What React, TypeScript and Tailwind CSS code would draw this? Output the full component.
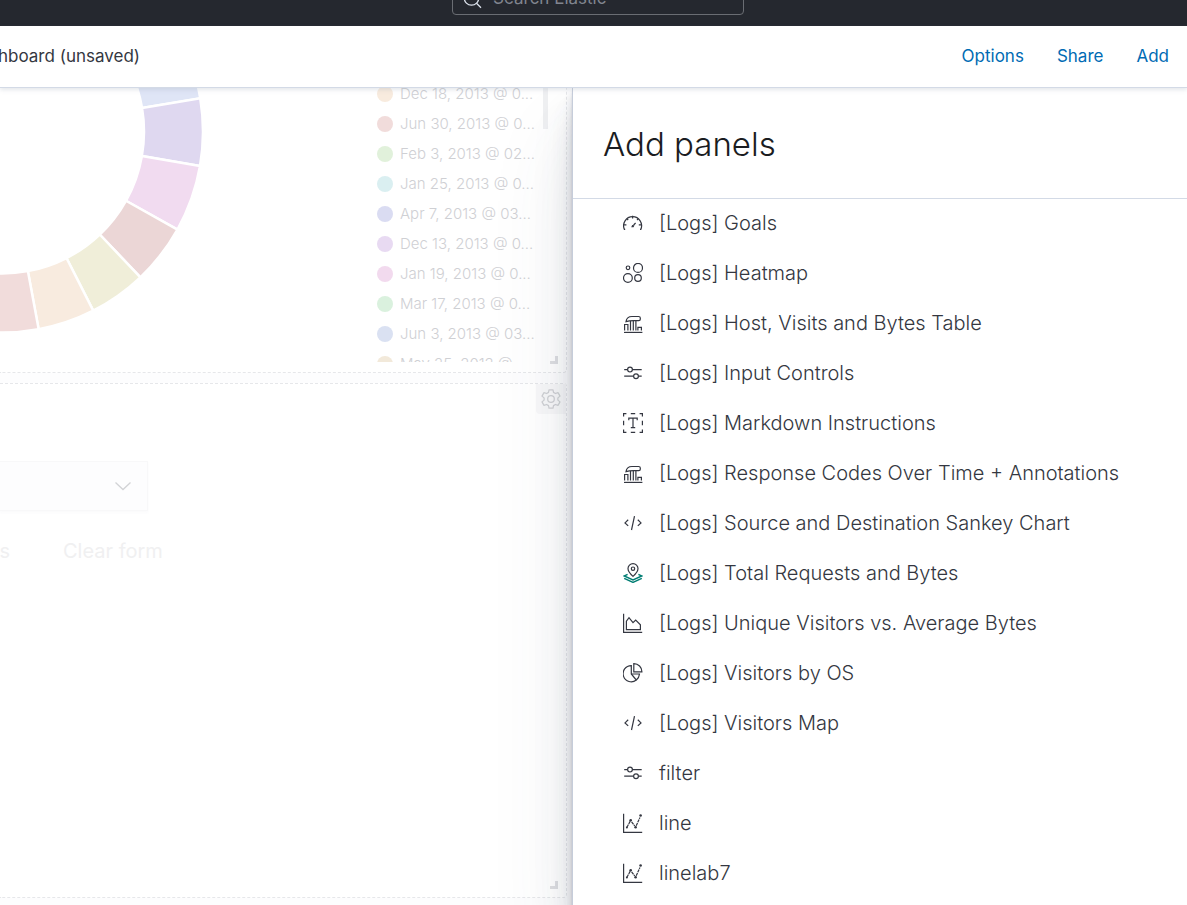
import { useId } from "react";
import type { ReactNode } from "react";

type IconName = "gauge" | "heatmap" | "builder" | "controls" | "text" | "code" | "map" | "area" | "pie" | "line";

const icons: Record<IconName, ReactNode> = {
  gauge: (
    <>
      <path d="M2.2 16.4H1.4A9 9 0 1 1 17.8 16.4H17" />
      <path d="M9.6 2.8v2.6M.8 11.8h2.6M15.8 11.8h2.6M4 5.8l1.2 1.2M15.2 5.8L14 7M12.6 10l-2 2" />
      <path d="M8.2 14.2l1-2.2 2.2.2-.8 2z" fill="currentColor" stroke="none" />
    </>
  ),
  heatmap: (
    <>
      <circle cx="5" cy="4.8" r="1.8" />
      <circle cx="15" cy="4.9" r="4.5" />
      <circle cx="4.9" cy="15" r="4.4" />
      <circle cx="15" cy="15" r="3.3" />
    </>
  ),
  builder: (
    <>
      <path d="M1 19.4h18.4" />
      <path d="M3 8.6C3.4 5.4 5.6 3.5 9 3.5h6.6c1.100 0 1.700.6 1.700 1.500v1.200c0 .900-.6 1.400-1.500 1.400h-5c-3 0-5.200.1-7.800 1z" />
      <path d="M7.500 8v9.400M10.300 8v9.400M12.900 8v9.400M1.600 17.400v-5.900h3.300v5.900M14.900 17.400v-3.100h3.500v3.100" />
    </>
  ),
  controls: (
    <>
      <path d="M1.200 6.600h3.300M9.500 6.600h9.200M1.200 13.200h9.300M15.500 13.200h3.200" />
      <circle cx="7" cy="6.600" r="2.400" />
      <circle cx="13" cy="13.200" r="2.400" />
    </>
  ),
  text: (
    <>
      <path d="M.6 3.400V.6h2.800M7.800.6h4.400M16.600.6h2.800v2.800M19.400 7.800v4.400M19.400 16.600v2.800h-2.800M12.200 19.400H7.800M3.400 19.400H.6v-2.800M.6 12.200V7.800" />
      <path d="M5.800 7.200v-2h8.400v2M10 5.200v9.400M7.800 14.600h4.400" />
    </>
  ),
  code: <path d="M5.200 6.800L2 9.900l3.200 3M11.500 3.200L8.500 17M14.800 6.800L18 9.900l-3.200 3" />,
  map: (
    <>
      <path d="M4.600 11.400L1.200 13l8.800 4 8.800-4-3.400-1.600M1.200 15.400l8.800 4 8.800-4" className="text-[#017d73]" stroke="currentColor" strokeWidth="1.400" />
      <path d="M10 13.400C7 10.800 5 8.400 5 5.600a5 5 0 0 1 10 0c0 2.800-2 5.200-5 7.800z" />
      <circle cx="10" cy="5.700" r="1.700" />
    </>
  ),
  area: (
    <>
      <path d="M.6.8v18.600h18.600" />
      <path d="M3.400 16.700V8.200L6 4.700l4 5 2.700-2.600 4.700 4.600v5z" />
    </>
  ),
  pie: (
    <>
      <path d="M8.300 2.600A8.100 8.100 0 1 0 13.300 17L8.300 11z" />
      <path d="M8.300 11h8.200a8.400 8.400 0 0 1-3.200 6" />
      <path d="M10.800.700a8 8 0 0 1 8.100 8.100h-8.100z" />
    </>
  ),
  line: (
    <>
      <path d="M.6.8v18.600h18.600" />
      <path d="M3.900 14.300l3.400-6.200M8.600 8.800l3.200 4.200M13.200 12.800L17 4.400" strokeDasharray="3.200 0.600" />
      <g fill="currentColor" stroke="none">
        <circle cx="3.900" cy="14.500" r="1" />
        <circle cx="7.700" cy="7.300" r="1.300" />
        <circle cx="12.600" cy="14.200" r="1.300" />
        <circle cx="17.600" cy="2.500" r="1.300" />
      </g>
    </>
  ),
};

function Icon({ name }: { name: IconName }) {
  return (
    <svg viewBox="0 0 20 20" className="size-5 shrink-0" fill="none" stroke="currentColor" strokeWidth="1.200" aria-hidden="true">
      {icons[name]}
    </svg>
  );
}

const panels: { icon: IconName; label: string }[] = [
  { icon: "gauge", label: "[Logs] Goals" },
  { icon: "heatmap", label: "[Logs] Heatmap" },
  { icon: "builder", label: "[Logs] Host, Visits and Bytes Table" },
  { icon: "controls", label: "[Logs] Input Controls" },
  { icon: "text", label: "[Logs] Markdown Instructions" },
  { icon: "builder", label: "[Logs] Response Codes Over Time + Annotations" },
  { icon: "code", label: "[Logs] Source and Destination Sankey Chart" },
  { icon: "map", label: "[Logs] Total Requests and Bytes" },
  { icon: "area", label: "[Logs] Unique Visitors vs. Average Bytes" },
  { icon: "pie", label: "[Logs] Visitors by OS" },
  { icon: "code", label: "[Logs] Visitors Map" },
  { icon: "controls", label: "filter" },
  { icon: "line", label: "line" },
  { icon: "line", label: "linelab7" },
];

const legend = [
  { dot: "bg-[#f8ebde]", label: "Dec 18, 2013 @ 0..." },
  { dot: "bg-[#f1dcdb]", label: "Jun 30, 2013 @ 0..." },
  { dot: "bg-[#e1f1db]", label: "Feb 3, 2013 @ 02..." },
  { dot: "bg-[#daeff1]", label: "Jan 25, 2013 @ 0..." },
  { dot: "bg-[#dadcf2]", label: "Apr 7, 2013 @ 03..." },
  { dot: "bg-[#e8daf2]", label: "Dec 13, 2013 @ 0..." },
  { dot: "bg-[#f2daee]", label: "Jan 19, 2013 @ 0..." },
  { dot: "bg-[#daf1de]", label: "Mar 17, 2013 @ 0..." },
  { dot: "bg-[#dae1f2]", label: "Jun 3, 2013 @ 03..." },
  { dot: "bg-[#f2e9da]", label: "May 25, 2013 @ ..." },
];

const slices = [
  { from: -30, to: -9.500, fill: "#dfe5f6" },
  { from: -9.500, to: 9.900, fill: "#dfd8f0" },
  { from: 9.900, to: 29.200, fill: "#f1dbf0" },
  { from: 29.200, to: 46.500, fill: "#ebd6d6" },
  { from: 46.500, to: 63, fill: "#f0eed9" },
  { from: 63, to: 79.500, fill: "#f8ebdf" },
  { from: 79.500, to: 98, fill: "#f1dcdb" },
];

function slicePath(from: number, to: number) {
  const at = (r: number, deg: number) => {
    const a = (deg * Math.PI) / 180;
    return `${(2 + r * Math.cos(a)).toFixed(2)} ${(43.5 + r * Math.sin(a)).toFixed(2)}`;
  };
  return `M${at(142, from)}L${at(201, from)}A201 201 0 0 1 ${at(201, to)}L${at(142, to)}A142 142 0 0 0 ${at(142, from)}Z`;
}

function ResizeHandle() {
  return <span className="absolute bottom-2 right-2 size-2 border-b-3 border-r-3 border-[#dedfe2]" />;
}

export default function App() {
  const selectId = useId();
  return (
    <div className="flex h-screen flex-col overflow-hidden bg-white font-['Inter',sans-serif] text-[#343741]">
      <div className="flex h-[26px] shrink-0 items-end justify-center overflow-hidden bg-[#25282f] pb-[11px] pl-[9px]">
        <div className="flex h-10 w-[292px] shrink-0 items-center gap-2.5 rounded-sm border border-[#6a6d73] px-2.5 pt-2 text-[#dfe5ef]">
          <svg viewBox="0 0 20 20" className="size-5 shrink-0" fill="none" stroke="currentColor" strokeWidth="1.300" aria-hidden="true">
            <circle cx="8.500" cy="9" r="7.200" />
            <path d="M13.500 14.200l4.500 4.500" />
          </svg>
          <input
            type="search"
            aria-label="Search Elastic"
            placeholder="Search Elastic"
            className="min-w-0 flex-1 bg-transparent text-[17px] outline-none placeholder:text-[#81858f]"
          />
        </div>
      </div>

      <header className="relative z-20 flex h-[62px] shrink-0 items-center justify-between border-b border-[#d3dae6] bg-white pb-0.5 pr-[18px] shadow-[0_2px_4px_rgba(152,162,179,0.25)]">
        <h1 className="flex w-[140px] justify-end overflow-hidden whitespace-nowrap text-[17px] leading-6">Dashboard (unsaved)</h1>
        <nav className="flex gap-[33px] text-[17px] leading-6 text-[#006bb4]">
          <a href="#options">Options</a>
          <a href="#share">Share</a>
          <a href="#add">Add</a>
        </nav>
      </header>

      <div className="flex min-h-0 flex-1">
        <main className="flex min-w-0 flex-1 flex-col gap-2.5 bg-[#fdfdfe] pb-[7px] pr-[5px]">
          <section className="relative flex h-[285px] shrink-0 justify-between overflow-hidden rounded-br border-b border-r border-dashed border-[#e6e7ea] bg-white">
            <svg viewBox="0 0 210 250" className="h-[250px] w-[210px] shrink-0" role="img" aria-label="Donut chart">
              {slices.map((s) => (
                <path key={s.from} d={slicePath(s.from, s.to)} fill={s.fill} stroke="#fff" strokeWidth="2.500" />
              ))}
            </svg>
            <div className="mr-[18px] flex h-[274px] gap-2.5 overflow-hidden">
              <ul className="-mt-[9px] w-[156px] text-[15px] font-light leading-[30px] text-[#cfd0d4]">
                {legend.map((l) => (
                  <li key={l.label} className="flex h-[30px] items-center gap-[7px] whitespace-nowrap">
                    <span className={`size-4 shrink-0 rounded-full ${l.dot}`} />
                    {l.label}
                  </li>
                ))}
              </ul>
              <div className="h-[41px] w-[5px] bg-[#eff0f2]" />
            </div>
            <ResizeHandle />
          </section>

          <section className="relative min-h-0 flex-1 rounded-r border-y border-r border-dashed border-[#e6e7ea] bg-white">
            <div className="flex justify-end">
              <button type="button" aria-label="Panel options" className="grid size-[30px] place-items-center rounded-bl bg-[#f8f8f9] text-[#cfd0d4]">
                <svg viewBox="0 0 20 20" className="size-5" fill="none" stroke="currentColor" strokeWidth="1.250" strokeLinejoin="round" aria-hidden="true">
                  <path d="M8 .8h4l.5 2.600 1.900 1.100 2.600-.9 2 3.500-2.100 1.800v2.200l2.100 1.800-2 3.500-2.600-.9-1.900 1.100-.5 2.600H8l-.5-2.600-1.900-1.100-2.600.9-2-3.500 2.100-1.800V8.900L1 7.100l2-3.500 2.600.9 1.900-1.100z" />
                  <circle cx="10" cy="10" r="3.300" />
                </svg>
              </button>
            </div>
            <div className="mt-[47px] flex w-[148px] items-center border border-l-0 border-[#f8f8f9] bg-[#fdfdfe] pr-3.5 shadow-[0_2px_2px_rgba(152,162,179,0.04)]">
              <label htmlFor={selectId} className="sr-only">Filter value</label>
              <select id={selectId} className="h-12 min-w-0 flex-1 appearance-none bg-transparent text-[18px] outline-none" />
              <svg viewBox="0 0 20 20" className="pointer-events-none size-5" fill="none" stroke="#d2d3d6" strokeWidth="1.300" aria-hidden="true">
                <path d="M2.500 6.500L10 13.500l7.500-7" />
              </svg>
            </div>
            <div className="mt-[25px] flex gap-[53px] text-[20px] leading-[30px] text-[#f0f0f1]">
              <button type="button" className="flex w-2.5 justify-end overflow-hidden whitespace-nowrap">Cancel changes</button>
              <button type="button">Clear form</button>
            </div>
            <ResizeHandle />
          </section>
        </main>

        <aside
          aria-label="Add panels"
          className="relative z-10 flex w-[615px] shrink-0 flex-col border-l border-[#c6cdda] bg-white shadow-[0_50px_80px_rgba(65,78,101,0.1),0_30px_40px_rgba(65,78,101,0.1),0_20px_20px_rgba(65,78,101,0.1),0_10px_10px_rgba(65,78,101,0.1),0_5px_5px_rgba(65,78,101,0.1),0_2px_2px_rgba(65,78,101,0.1)]"
        >
          <div className="flex h-[111px] shrink-0 items-center border-b border-[#d3dae6] px-[30px] pt-0.5">
            <h2 className="text-[33px] font-light leading-10 text-[#1a1c21]">Add panels</h2>
          </div>
          <ul className="min-h-0 flex-1 overflow-hidden">
            {panels.map((p) => (
              <li key={p.label}>
                <button type="button" className="flex h-[50px] w-full items-center gap-4 pb-0.5 pl-[50px] text-left text-[20px] font-light leading-[30px]">
                  <Icon name={p.icon} />
                  {p.label}
                </button>
              </li>
            ))}
          </ul>
        </aside>
      </div>
    </div>
  );
}
